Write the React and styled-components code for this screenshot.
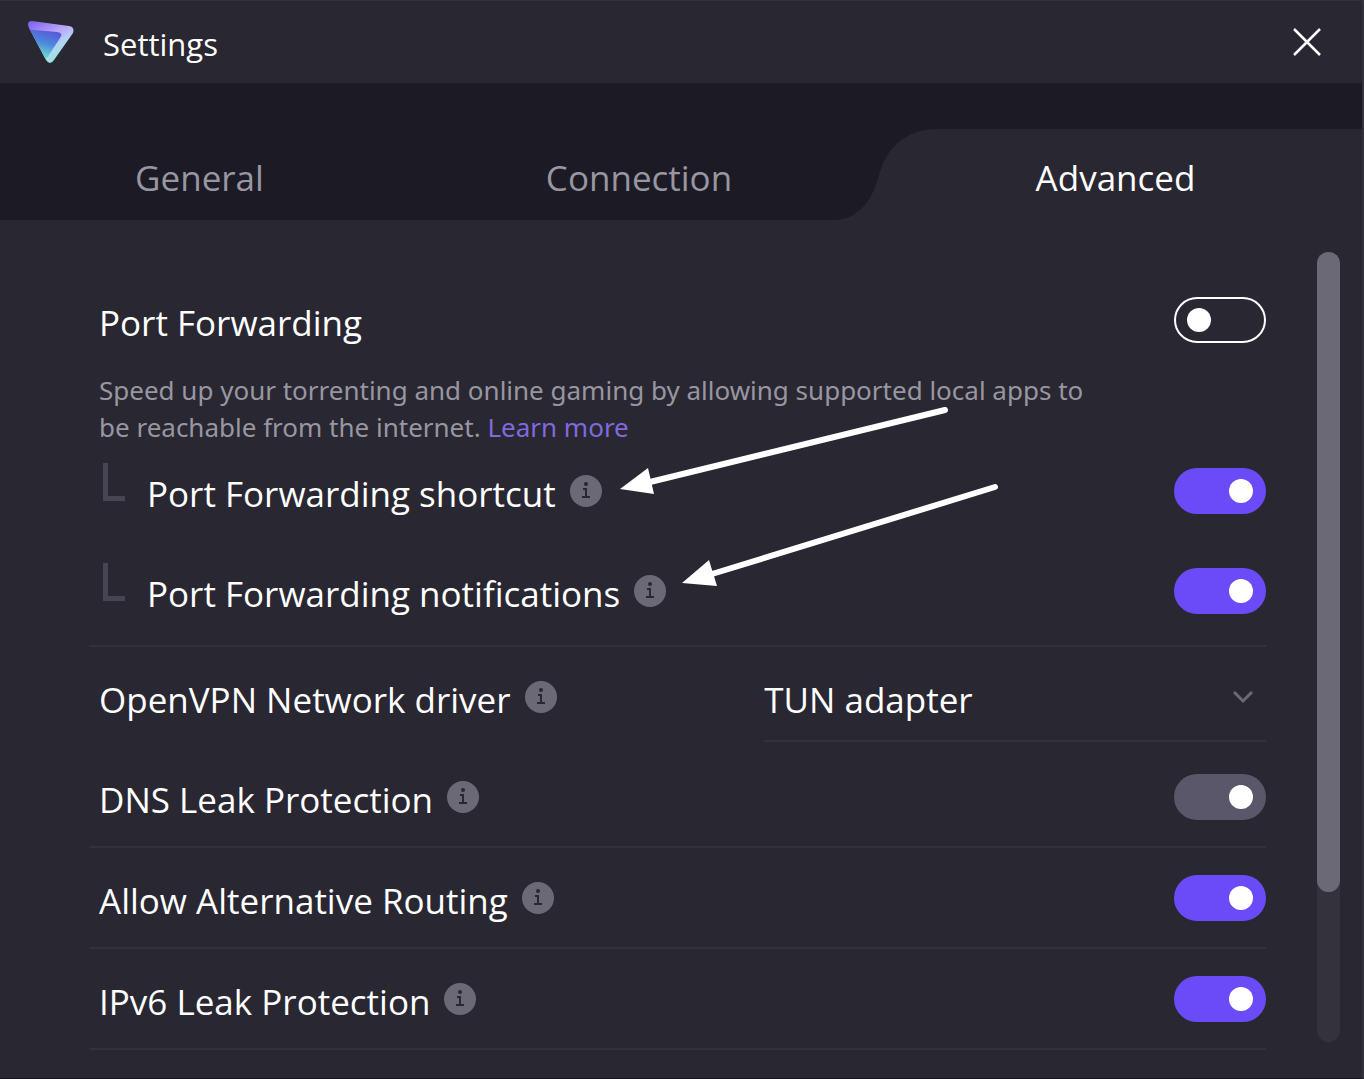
import React, { useState } from "react";
import styled, { createGlobalStyle } from "styled-components";

const GlobalStyle = createGlobalStyle`
  * {
    box-sizing: border-box;
  }

  body {
    margin: 0;
    background-color: #292731;
    color: #fff;
    font-family: "Open Sans", "Segoe UI", sans-serif;
  }
`;

const Window = styled.div`
  display: flex;
  flex-direction: column;
  min-height: 100vh;
  border-top: 1px solid #33313a;
  border-right: 2px solid #33313a;
  border-bottom: 1px solid #17151e;
`;

const TitleBar = styled.header`
  display: flex;
  align-items: center;
  height: 82px;
  padding: 0 40px 0 27px;
`;

const Title = styled.h1`
  flex: 1;
  margin: 0;
  padding: 4px 0 0 29px;
  font-size: 31px;
  font-weight: 400;
`;

const CloseButton = styled.button`
  display: flex;
  padding: 0;
  border: 0;
  background: none;
  color: #fff;
  cursor: pointer;
`;

const Tabs = styled.nav`
  display: flex;
  height: 137px;
  padding-top: 46px;
  background-color: #1c1a24;
`;

const Tab = styled.button`
  position: relative;
  flex: ${props => props.$grow} 1 0;
  padding: ${props => (props.$active ? "6px 10px 0 0" : "6px 0 0")};
  border: 0;
  background-color: ${props => (props.$active ? "#292731" : "transparent")};
  color: ${props => (props.$active ? "#fff" : "#9896a1")};
  font-family: inherit;
  font-size: 35px;
  cursor: pointer;
`;

/* sits over the left side of the active tab */
const TabCurve = styled.svg`
  position: absolute;
  top: 0;
  left: -46px;
`;

const Body = styled.main`
  display: flex;
  flex: 1;
  padding: 32px 22px 0 89px;
`;

const List = styled.div`
  position: relative;
  flex: 1;
  padding-top: 18px;
  margin-right: 51px;
`;

const StyledRow = styled.div`
  display: flex;
  align-items: center;
  height: ${props => (props.$divider ? "101px" : "100px")};
  padding-left: 10px;
  border-bottom: ${props => (props.$divider ? "2px solid #33313b" : "0")};
`;

const Group = styled.div`
  display: grid;
  gap: 10px;
  padding-bottom: 9px;
  border-bottom: 2px solid #33313b;

  ${StyledRow} {
    height: 90px;
  }
`;

const Label = styled.label`
  padding-top: 6px;
  font-size: 35px;
  line-height: 48px;
  white-space: nowrap;
`;

const Branch = styled.span`
  width: 22px;
  height: 38px;
  margin: 0 22px 18px 4px;
  border: solid #474551;
  border-width: 0 0 5px 5px;
`;

const InfoButton = styled.button`
  display: flex;
  margin-left: 14px;
  padding: 0;
  border: 0;
  background: none;
  cursor: pointer;
`;

const Toggle = styled.input`
  appearance: none;
  display: flex;
  align-items: center;
  width: 92px;
  height: 46px;
  margin: 0 0 0 auto;
  padding: 0 11px;
  border: 2px solid #fff;
  border-radius: 23px;
  cursor: pointer;

  &::before {
    content: "";
    width: 24px;
    height: 24px;
    border-radius: 50%;
    background-color: #fff;
  }

  &:checked {
    justify-content: flex-end;
    border-color: #6b4bf8;
    background-color: #6b4bf8;
  }

  &:disabled {
    border-color: #5b576a;
    background-color: #5b576a;
  }
`;

const Description = styled.p`
  max-width: 1020px;
  margin: 0;
  padding: 2px 0 0 10px;
  color: #9896a1;
  font-family: "Noto Sans", "Segoe UI", sans-serif;
  font-size: 26px;
  line-height: 37px;
`;

const Link = styled.a`
  color: #8169dc;
  text-decoration: none;
`;

const SelectBox = styled.div`
  position: relative;
  width: 43%;
  margin-left: auto;
`;

const Select = styled.select`
  appearance: none;
  width: 100%;
  height: 90px;
  padding: 6px 60px 0 0;
  border: 0;
  border-bottom: 2px solid #33313b;
  background: none;
  color: #fff;
  font-family: inherit;
  font-size: 35px;
`;

const SelectArrow = styled.svg`
  position: absolute;
  top: 36px;
  right: 12px;
  pointer-events: none;
`;

const ScrollTrack = styled.div`
  width: 23px;
  margin-bottom: 36px;
  border-radius: 12px;
  background-color: #34323c;
`;

const ScrollThumb = styled.div`
  height: ${props => props.$size}%;
  border-radius: 12px;
  background-color: #6c6977;
`;

/* annotation arrows drawn over the rows */
const Arrows = styled.svg`
  position: absolute;
  top: 148px;
  left: 521px;
  pointer-events: none;
`;

const Logo = () => (
  <svg width="47" height="44" viewBox="0 0 47 44" aria-hidden="true">
    <defs>
      <linearGradient id="rim" x1="0" y1="0" x2="0.6" y2="1">
        <stop offset="0" stopColor="#7a5cf0" />
        <stop offset="0.45" stopColor="#b9a5f8" />
        <stop offset="0.7" stopColor="#b5d4f5" />
        <stop offset="1" stopColor="#8fe9d8" />
      </linearGradient>
      <linearGradient id="core" x1="0.7" y1="0" x2="0.4" y2="1">
        <stop offset="0" stopColor="#5a4fd6" />
        <stop offset="0.5" stopColor="#4c86dc" />
        <stop offset="1" stopColor="#6fe0d0" />
      </linearGradient>
    </defs>
    <path
      d="M5 1 L42 6 Q48 7 46 13 L27 40 Q23 46 19 40 L2 8 Q-1 1 5 1Z"
      fill="url(#rim)"
    />
    <path
      d="M2 8 Q3 10 6 10 L30 12 Q37 13 33 18 L20 38 L18 38Z"
      fill="url(#core)"
    />
  </svg>
);

const InfoIcon = () => (
  <svg width="32" height="32" viewBox="0 0 32 32" aria-hidden="true">
    <circle cx="16" cy="16" r="16" fill="#6c6977" />
    <circle cx="16" cy="9" r="2" fill="#292731" />
    <path
      d="M13 14h3v8M12 22h8"
      fill="none"
      stroke="#292731"
      strokeWidth="2"
    />
  </svg>
);

const Row = ({ id, label, info, nested, divider, children }) => (
  <StyledRow $divider={divider}>
    {nested && <Branch />}
    <Label htmlFor={id}>{label}</Label>
    {info && (
      <InfoButton aria-label={`About ${label}`}>
        <InfoIcon />
      </InfoButton>
    )}
    {children}
  </StyledRow>
);

const tabs = [
  { name: "General", grow: 399 },
  { name: "Connection", grow: 480 },
  { name: "Advanced", grow: 473 }
];

const App = () => {
  const [tab, setTab] = useState("Advanced");

  return (
    <>
      <GlobalStyle />
      <Window>
        <TitleBar>
          <Logo />
          <Title>Settings</Title>
          <CloseButton aria-label="Close">
            <svg width="30" height="30" viewBox="0 0 30 30">
              <path
                d="M2 2L28 28M28 2L2 28"
                stroke="currentColor"
                strokeWidth="2.5"
              />
            </svg>
          </CloseButton>
        </TitleBar>
        <Tabs>
          {tabs.map(({ name, grow }) => (
            <Tab
              key={name}
              $grow={grow}
              $active={name === tab}
              onClick={() => setTab(name)}
            >
              {name === tab && (
                <TabCurve width="106" height="91" viewBox="0 0 106 91">
                  <path d="M46 0H106C72 0 54 18 46 46Z" fill="#1c1a24" />
                  <path d="M0 91C26 91 40 70 46 46V91Z" fill="#292731" />
                </TabCurve>
              )}
              {name}
            </Tab>
          ))}
        </Tabs>
        <Body>
          <List>
            <Row id="port" label="Port Forwarding">
              <Toggle type="checkbox" id="port" />
            </Row>
            <Description>
              Speed up your torrenting and online gaming by allowing supported
              local apps to be reachable from the internet.{" "}
              <Link href="#learn-more">Learn more</Link>
            </Description>
            <Group>
              <Row id="shortcut" label="Port Forwarding shortcut" info nested>
                <Toggle type="checkbox" id="shortcut" defaultChecked />
              </Row>
              <Row
                id="notifications"
                label="Port Forwarding notifications"
                info
                nested
              >
                <Toggle type="checkbox" id="notifications" defaultChecked />
              </Row>
            </Group>
            <Row id="driver" label="OpenVPN Network driver" info>
              <SelectBox>
                <Select id="driver">
                  <option>TUN adapter</option>
                  <option>TAP adapter</option>
                </Select>
                <SelectArrow width="22" height="18" viewBox="0 0 22 18">
                  <path
                    d="M2 4L11 13L20 4"
                    fill="none"
                    stroke="#6c6977"
                    strokeWidth="3"
                  />
                </SelectArrow>
              </SelectBox>
            </Row>
            <Row id="dns" label="DNS Leak Protection" info divider>
              <Toggle type="checkbox" id="dns" defaultChecked disabled />
            </Row>
            <Row id="routing" label="Allow Alternative Routing" info divider>
              <Toggle type="checkbox" id="routing" defaultChecked />
            </Row>
            <Row id="ipv6" label="IPv6 Leak Protection" info divider>
              <Toggle type="checkbox" id="ipv6" defaultChecked />
            </Row>
            <Arrows width="400" height="200" viewBox="610 400 400 200">
              <g stroke="#fff" strokeWidth="6" strokeLinecap="round">
                <path d="M945 410L650 482" />
                <path d="M995 487L712 574" />
              </g>
              <path d="M620 489L648 468L654 494Z" fill="#fff" />
              <path d="M682 583L709 560L717 586Z" fill="#fff" />
            </Arrows>
          </List>
          <ScrollTrack>
            <ScrollThumb $size={81} />
          </ScrollTrack>
        </Body>
      </Window>
    </>
  );
};

export default App;
